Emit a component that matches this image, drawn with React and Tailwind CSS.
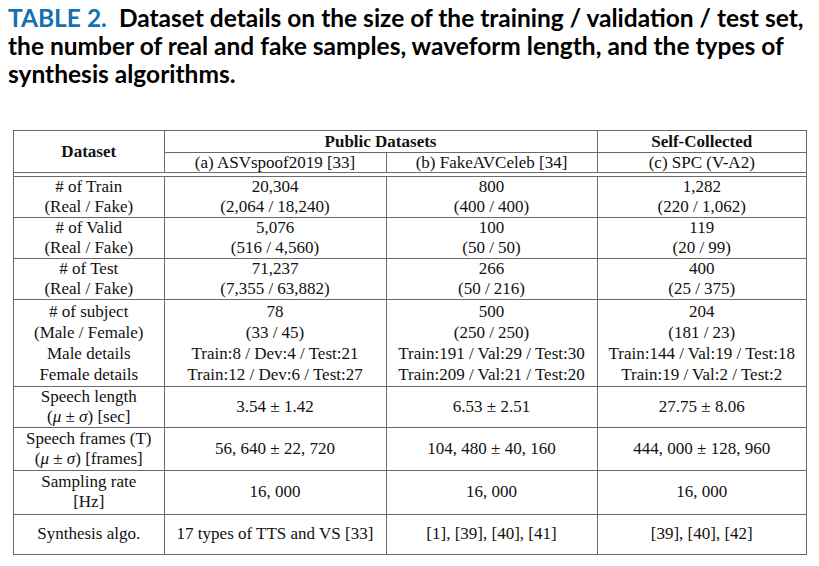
import React from "react";

const serif = { fontFamily: '"Liberation Serif", "Times New Roman", serif' };

const bodyRows = [
  {
    label: ["# of Train", "(Real / Fake)"],
    cells: [
      ["20,304", "(2,064 / 18,240)"],
      ["800", "(400 / 400)"],
      ["1,282", "(220 / 1,062)"],
    ],
    h: "h-[41px]",
  },
  {
    label: ["# of Valid", "(Real / Fake)"],
    cells: [
      ["5,076", "(516 / 4,560)"],
      ["100", "(50 / 50)"],
      ["119", "(20 / 99)"],
    ],
    h: "h-[40px]",
  },
  {
    label: ["# of Test", "(Real / Fake)"],
    cells: [
      ["71,237", "(7,355 / 63,882)"],
      ["266", "(50 / 216)"],
      ["400", "(25 / 375)"],
    ],
    h: "h-[41px]",
  },
  {
    label: ["# of subject", "(Male / Female)", "Male details", "Female details"],
    cells: [
      ["78", "(33 / 45)", "Train:8 / Dev:4 / Test:21", "Train:12 / Dev:6 / Test:27"],
      ["500", "(250 / 250)", "Train:191 / Val:29 / Test:30", "Train:209 / Val:21 / Test:20"],
      ["204", "(181 / 23)", "Train:144 / Val:19 / Test:18", "Train:19 / Val:2 / Test:2"],
    ],
    h: "h-[87px]",
    tall: true,
  },
  {
    label: [
      "Speech length",
      <span key="m">
        (<i>μ</i> ± <i>σ</i>) [sec]
      </span>,
    ],
    cells: [["3.54 ± 1.42"], ["6.53 ± 2.51"], ["27.75 ± 8.06"]],
    h: "h-[41px]",
  },
  {
    label: [
      "Speech frames (T)",
      <span key="m">
        (<i>μ</i> ± <i>σ</i>) [frames]
      </span>,
    ],
    cells: [["56, 640 ± 22, 720"], ["104, 480 ± 40, 160"], ["444, 000 ± 128, 960"]],
    h: "h-[43px]",
  },
  {
    label: ["Sampling rate", "[Hz]"],
    cells: [["16, 000"], ["16, 000"], ["16, 000"]],
    h: "h-[44px]",
  },
  {
    label: ["Synthesis algo."],
    cells: [["17 types of TTS and VS [33]"], ["[1], [39], [40], [41]"], ["[39], [40], [42]"]],
    h: "h-[40px]",
  },
];

const Cols = () => (
  <colgroup>
    <col className="w-[150px]" />
    <col className="w-[222px]" />
    <col className="w-[211px]" />
    <col />
  </colgroup>
);

const Lines = ({ lines, tall }) => (
  <div className={tall ? "leading-[21px]" : "leading-[20px]"}>
    {lines.map((l, i) => (
      <div key={i} className="whitespace-nowrap">
        {l}
      </div>
    ))}
  </div>
);

export default function App() {
  return (
    <div className="w-[819px] h-[566px] bg-white overflow-hidden">
      {/* Caption */}
      <div
        className="pl-[8px] pt-[4px] text-[24.5px] leading-[28px] font-bold text-black"
        style={{ fontFamily: 'Lato, "Open Sans", sans-serif' }}
      >
        <span className="text-[#1470b0]">TABLE 2.</span>
        <span className="ml-[12px]">
          Dataset details on the size of the training / validation / test set,
        </span>
        <br />
        the number of real and fake samples, waveform length, and the types of
        <br />
        synthesis algorithms.
      </div>

      {/* Table */}
      <div
        className="mt-[42px] ml-[13px] w-[794px] border-x border-[#6a6a6a] text-[17px] text-[#111]"
        style={serif}
      >
        <table className="w-full table-fixed border-collapse">
          <Cols />
          <tbody>
            <tr className="h-[22px] border-t border-[#6a6a6a]">
              <td rowSpan={2} className="text-center font-bold align-middle">
                Dataset
              </td>
              <td colSpan={2} className="border-l border-[#6a6a6a] text-center font-bold leading-[20px]">
                Public Datasets
              </td>
              <td className="border-l border-[#6a6a6a] text-center font-bold leading-[20px]">
                Self-Collected
              </td>
            </tr>
            <tr className="h-[20px] border-t border-[#6a6a6a]">
              <td className="border-l border-[#6a6a6a] text-center leading-[19px]">(a) ASVspoof2019 [33]</td>
              <td className="border-l border-[#6a6a6a] text-center leading-[19px]">(b) FakeAVCeleb [34]</td>
              <td className="border-l border-[#6a6a6a] text-center leading-[19px]">(c) SPC (V-A2)</td>
            </tr>
            <tr className="border-t border-[#6a6a6a]">
              <td colSpan={4} className="h-[3px] p-0"></td>
            </tr>
          </tbody>
        </table>

        <table className="w-full table-fixed border-collapse">
          <Cols />
          <tbody>
            {bodyRows.map((r, i) => (
              <tr key={i} className={`${r.h} border-t border-b border-[#6a6a6a]`}>
                <td className="text-center align-middle">
                  <Lines lines={r.label} tall={r.tall} />
                </td>
                {r.cells.map((c, j) => (
                  <td key={j} className="border-l border-[#6a6a6a] text-center align-middle">
                    <Lines lines={c} tall={r.tall} />
                  </td>
                ))}
              </tr>
            ))}
          </tbody>
        </table>
      </div>
    </div>
  );
}
